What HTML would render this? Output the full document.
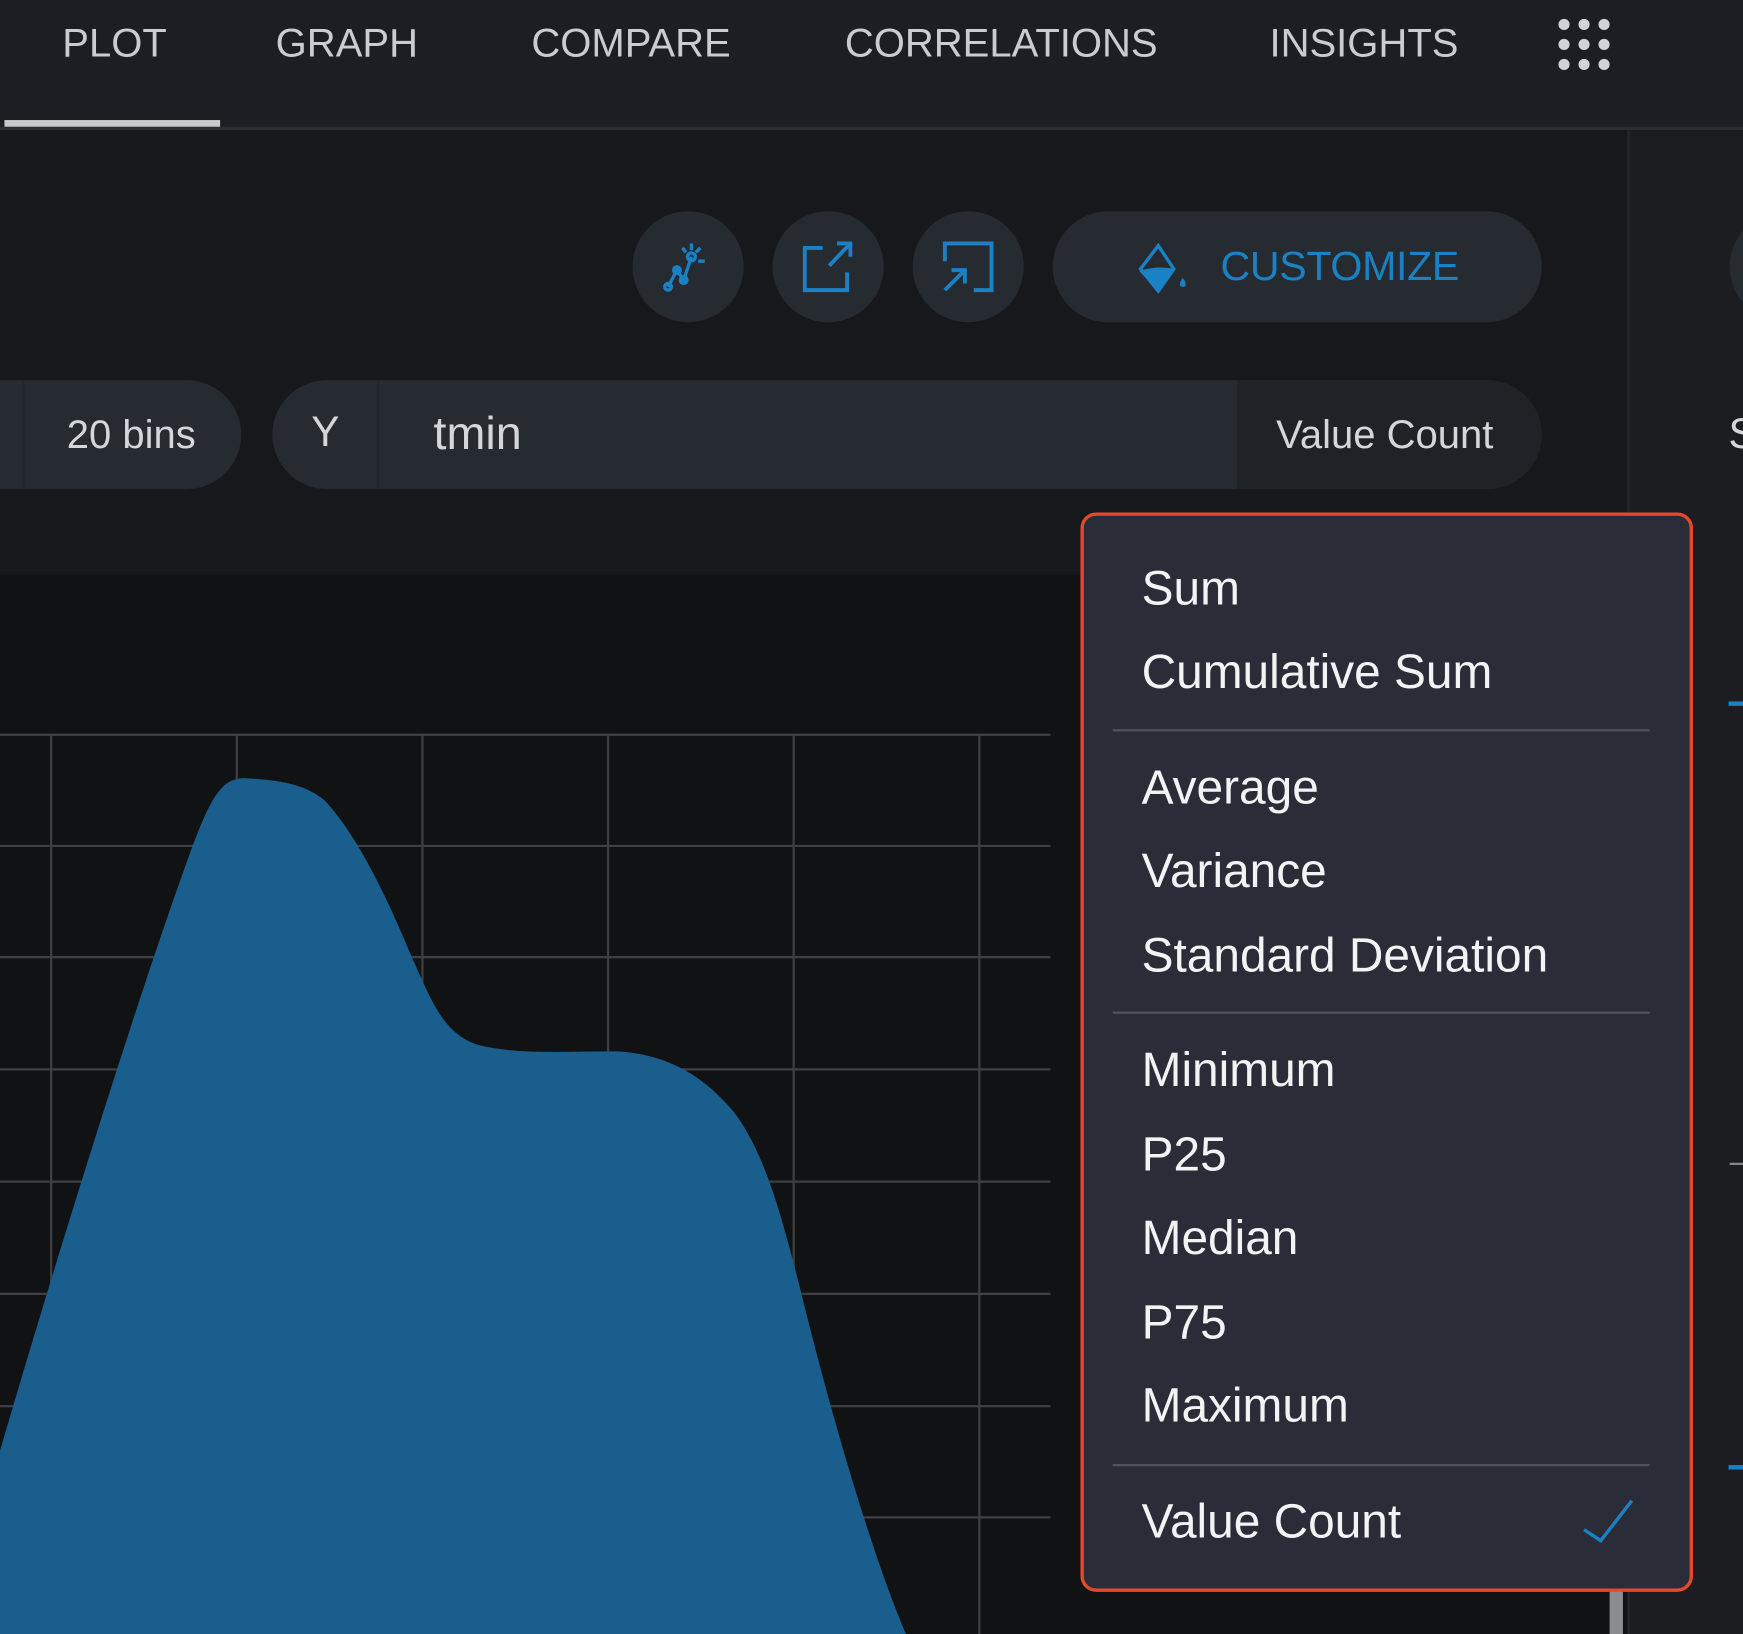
<!DOCTYPE html>
<html><head><meta charset="utf-8"><style>
html,body{margin:0;padding:0;width:1743px;height:1634px;overflow:hidden;background:#17181c;}
#w{position:absolute;left:0;top:0;width:1568px;height:1470px;transform:scale(1.11161);transform-origin:0 0;background:#17181c;font-family:"Liberation Sans",sans-serif;overflow:hidden}
.a{position:absolute}
.tab{position:absolute;top:18px;font-size:36px;color:#c9ccd2;letter-spacing:0}
.circ{position:absolute;top:190px;width:100px;height:100px;border-radius:50%;background:#262a31}
.item{position:absolute;left:1027px;font-size:43px;color:#f2f3f5}
.sep{position:absolute;left:1001px;width:483px;height:2px;background:#50535b}
</style></head><body><div id="w">
<div class="a" style="left:0;top:0;width:1568px;height:115px;background:#1c1e24"></div>
<div class="a" style="left:0;top:114px;width:1568px;height:3px;background:#2b2e35"></div>
<div class="a" style="left:4px;top:108px;width:194px;height:6px;background:#c8cacd"></div>
<div class="tab" style="left:56px">PLOT</div>
<div class="tab" style="left:248px">GRAPH</div>
<div class="tab" style="left:478px">COMPARE</div>
<div class="tab" style="left:760px">CORRELATIONS</div>
<div class="tab" style="left:1142px">INSIGHTS</div>
<svg class="a" style="left:1400px;top:15px" width="50" height="50" viewBox="0 0 50 50" fill="#d0d3d8"><circle cx="7" cy="7" r="5"/><circle cx="25" cy="7" r="5"/><circle cx="43" cy="7" r="5"/><circle cx="7" cy="25" r="5"/><circle cx="25" cy="25" r="5"/><circle cx="43" cy="25" r="5"/><circle cx="7" cy="43" r="5"/><circle cx="25" cy="43" r="5"/><circle cx="43" cy="43" r="5"/></svg>
<div class="a" style="left:1464px;top:117px;width:2px;height:1353px;background:#24272d"></div>
<div class="a" style="left:1466px;top:117px;width:102px;height:1353px;background:#1b1d21"></div>
<div class="circ" style="left:569px"></div>
<div class="circ" style="left:695px"></div>
<div class="circ" style="left:821px"></div>
<svg class="a" style="left:594px;top:215px" width="50" height="50" viewBox="0 0 50 50" fill="none" stroke="#1a82c4" stroke-width="3"><polyline points="7,43 15,28 21,37 28,16"/><circle cx="7" cy="43" r="3"/><circle cx="15" cy="28" r="3"/><circle cx="21" cy="37" r="3"/><circle cx="28" cy="16" r="3.5"/><path d="M28 4v6M36 8l-4 4M40 20h-6M20 8l3 4"/></svg>
<svg class="a" style="left:720px;top:215px" width="50" height="50" viewBox="0 0 50 50" fill="none" stroke="#1a82c4" stroke-width="3.5"><path d="M20 8H4v38h38V30M26 24L45 4M33 4h12v12"/></svg>
<svg class="a" style="left:846px;top:215px" width="50" height="50" viewBox="0 0 50 50" fill="none" stroke="#1a82c4" stroke-width="3.5"><path d="M4 20V4h42v42H30M4 46L22 28M10 28h12v12"/></svg>
<div class="a" style="left:947px;top:190px;width:440px;height:100px;border-radius:50px;background:#262a31"></div>
<svg class="a" style="left:1022px;top:218px" width="50" height="46" viewBox="0 0 50 46"><path d="M20 3L4 24L20 44L34 24z" fill="none" stroke="#1a82c4" stroke-width="3"/><path d="M3 26C14 22 24 22 35 24L20 44z" fill="#1a82c4"/><path d="M42 32c-3 4-4 8 0 8s3-4 0-8z" fill="#1a82c4"/></svg>
<div class="a" style="left:1098px;top:219px;font-size:37px;color:#1a82c4;letter-spacing:-0.3px">CUSTOMIZE</div>
<div class="a" style="left:-60px;top:342px;width:277px;height:98px;border-radius:49px;background:#262a31"></div>
<div class="a" style="left:20px;top:342px;width:2px;height:98px;background:#22252b"></div>
<div class="a" style="left:60px;top:370px;font-size:36px;color:#d4d6da">20 bins</div>
<div class="a" style="left:245px;top:342px;width:1142px;height:98px;border-radius:49px;background:#262a31;overflow:hidden"><div class="a" style="left:868px;top:0;width:274px;height:98px;background:#1f2227"></div><div class="a" style="left:94px;top:0;width:2px;height:98px;background:#22252b"></div></div>
<div class="a" style="left:280px;top:368px;font-size:38px;color:#d4d6da">Y</div>
<div class="a" style="left:390px;top:366px;font-size:42px;color:#d4d6da">tmin</div>
<div class="a" style="left:1148px;top:370px;font-size:36px;color:#d4d6da">Value Count</div>
<div class="a" style="left:1556px;top:190px;width:100px;height:100px;border-radius:50%;background:#262a31"></div>
<div class="a" style="left:1555px;top:370px;font-size:38px;color:#d4d6da">S</div>
<div class="a" style="left:1555px;top:631px;width:13px;height:4px;background:#1a82c4"></div>
<div class="a" style="left:1556px;top:1046px;width:12px;height:2px;background:#888"></div>
<div class="a" style="left:1555px;top:1318px;width:13px;height:4px;background:#1a82c4"></div>
<div class="a" style="left:0;top:517px;width:1464px;height:953px;background:#111214"></div>
<svg class="a" style="left:0;top:517px" width="1464" height="953" viewBox="0 517 1464 953">
<g stroke="#3e4046" stroke-width="2"><path d="M46 661V1470M213 661V1470M380 661V1470M547 661V1470M714 661V1470M881 661V1470"/><path d="M0 661H945M0 761H945M0 861H945M0 962H945M0 1063H945M0 1164H945M0 1265H945M0 1365H945"/></g>
<path d="M0 1305C60 1100 130 880 170 770C190 715 200 700 220 700C255 702 275 706 292 720C320 750 345 800 370 860C390 905 400 930 430 940C470 950 520 945 560 946C600 950 630 965 660 1000C690 1040 705 1100 725 1180C750 1280 785 1400 815 1470H0z" fill="#1a5e8d"/>
</svg>
<div class="a" style="left:1448px;top:1428px;width:12px;height:42px;background:#8a8c90"></div>
<div class="a" style="left:972px;top:461px;width:545px;height:965px;border:3px solid #e8482a;border-radius:14px;background:#2a2d37"></div>
<div class="item" style="left:1027px;top:506px">Sum</div>
<div class="item" style="top:581px">Cumulative Sum</div>
<div class="sep" style="top:656px"></div>
<div class="item" style="top:685px">Average</div>
<div class="item" style="top:760px">Variance</div>
<div class="item" style="top:836px">Standard Deviation</div>
<div class="sep" style="top:910px"></div>
<div class="item" style="top:939px">Minimum</div>
<div class="item" style="top:1015px">P25</div>
<div class="item" style="top:1090px">Median</div>
<div class="item" style="top:1166px">P75</div>
<div class="item" style="top:1241px">Maximum</div>
<div class="sep" style="top:1317px"></div>
<div class="item" style="top:1345px">Value Count</div>
<svg class="a" style="left:1420px;top:1346px" width="52" height="46" viewBox="0 0 52 46"><path d="M5 30L20 40L48 4" fill="none" stroke="#1a82c4" stroke-width="3"/></svg>
</div></body></html>
